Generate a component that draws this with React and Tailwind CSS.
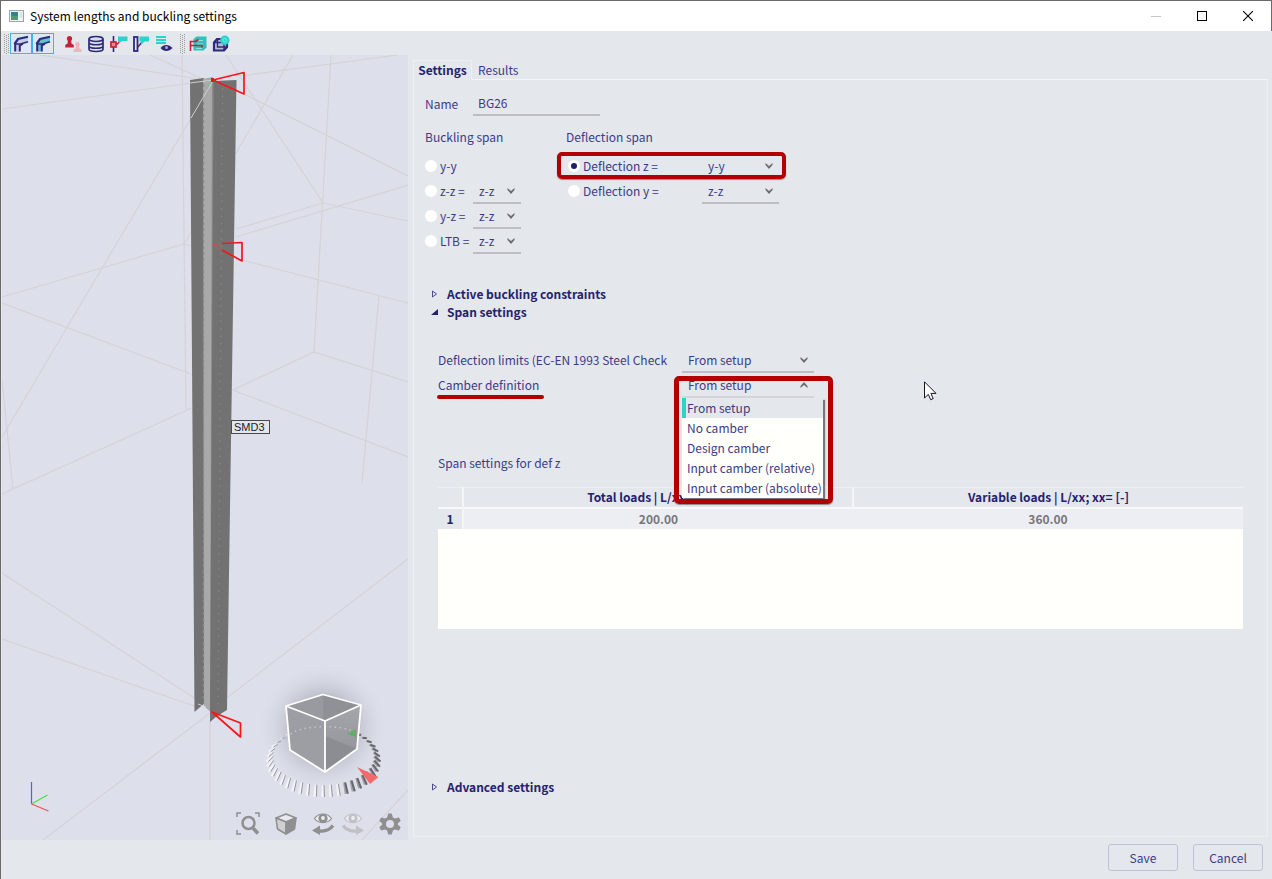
import { useState } from "react";
import clsx from "clsx";

const NAVY = "#2d2a7b";
const TEAL = "#2bd3cb";
const RED = "#c32338";

/* guide lines of the structure around the member */
const GRID_LINES = [
  "40,55 213,81",
  "150,55 205,80",
  "2,109 213,80",
  "240,76 398,55",
  "182,55 186,410 192,408",
  "213,81 2,437",
  "226,55 323,203",
  "293,55 236,153",
  "331,55 314,352",
  "240,92 408,176",
  "236,229 323,203 408,221",
  "236,237 408,185",
  "2,297 184,244 191,246",
  "184,244 191,232",
  "2,303 191,374",
  "242,260 408,303",
  "408,382 314,352 233,390 408,457",
  "379,296 362,483",
  "192,408 2,494",
  "2,380 13,489",
  "2,573 196,699",
  "2,639 200,708",
  "408,559 228,697",
  "210,713 43,840",
  "210,720 210,840",
  "408,790 362,840",
];

const RING = Array.from({ length: 44 }, (_, i) => {
  const a = (i / 44) * Math.PI * 2 + Math.PI / 2;
  const cos = Math.cos(a);
  const sin = Math.sin(a);
  return {
    x1: 324 + 56 * cos,
    y1: 761.5 + 35.5 * sin,
    x2: 324 + 51 * cos,
    y2: 756.5 + 28.5 * sin,
    side: cos,
    front: sin,
  };
});

const CAMBER_OPTIONS = [
  "From setup",
  "No camber",
  "Design camber",
  "Input camber (relative)",
  "Input camber (absolute)",
];

export default function App() {
  return (
    <div className="relative flex min-h-screen flex-col border-t border-l border-[#6b6b6b] bg-[#e4e7ec] font-['Noto_Sans_CJK_SC',sans-serif] text-[12px] leading-5 text-[#3d3b86]">
      <TitleBar />
      <Toolbar />
      <main className="flex flex-1 pl-px">
        <Viewport />
        <SettingsPanel />
      </main>
      <footer className="flex h-[39px] shrink-0 items-start justify-end gap-[15px] pt-1 pr-[9px]">
        <FooterButton>Save</FooterButton>
        <FooterButton>Cancel</FooterButton>
      </footer>
      <svg
        className="pointer-events-none absolute top-[380px] left-[923px]"
        width="13"
        height="20"
        viewBox="0 0 13 20"
      >
        <path
          d="M.5 .8V17L4.3 13.4L6.7 18.7L9.2 17.6L6.9 12.4H12Z"
          fill="#fff"
          stroke="#15152a"
        />
      </svg>
    </div>
  );
}

function FooterButton({ children }) {
  return (
    <button
      type="button"
      className="h-[27px] w-[70px] rounded-[3px] border border-[#bfc1d9]"
    >
      {children}
    </button>
  );
}

/* -------- window chrome ---------- */
function TitleBar() {
  return (
    <header className="flex h-[30px] shrink-0 items-center border-r border-[#6b6b6b] bg-white pl-2 text-black">
      <svg width="15" height="12" viewBox="0 0 15 12">
        <rect x=".5" y=".5" width="14" height="11" fill="#f4f6f6" stroke="#9aa5ab" />
        <rect x="2" y="2" width="7" height="8" fill="#3c7f86" />
        <rect x="2" y="6" width="7" height="4" fill="#4f9e72" />
        <path d="M10.5 3h3M10.5 5h3M10.5 7h3" stroke="#c2ced2" />
      </svg>
      <h1 className="ml-[6px] flex-1 text-[12px]">System lengths and buckling settings</h1>
      <button type="button" aria-label="Minimize" className="flex h-full w-[46px] items-center justify-center">
        <svg width="10" height="10"><path d="M0 5.5h10" stroke="#c4c4c4" /></svg>
      </button>
      <button type="button" aria-label="Maximize" className="flex h-full w-[46px] items-center justify-center">
        <svg width="10" height="10"><rect x=".5" y=".5" width="9" height="9" fill="none" stroke="#000" /></svg>
      </button>
      <button type="button" aria-label="Close" className="flex h-full w-[46px] items-center justify-center">
        <svg width="10" height="10"><path d="M0 0L10 10M10 0L0 10" stroke="#000" strokeWidth="1.1" /></svg>
      </button>
    </header>
  );
}

function Grip() {
  const rows = Array.from({ length: 10 }, (_, i) => i);
  return (
    <svg width="5" height="20" viewBox="0 0 5 20" fill="#9b9b9b" shapeRendering="crispEdges">
      {rows.map((r) => (
        <g key={r}>
          <rect x="0" y={r * 2} width="1" height="1" />
          <rect x="2" y={r * 2 + 1} width="1" height="1" />
          <rect x="4" y={r * 2} width="1" height="1" />
        </g>
      ))}
    </svg>
  );
}

function ToolButton({ label, active, children }) {
  return (
    <button
      type="button"
      aria-label={label}
      className={clsx(
        "flex h-[21px] w-[22px] items-center justify-center",
        active && "border border-[#3db4f2] bg-[#dfe8f2]"
      )}
    >
      <svg width="18" height="18" viewBox="0 0 18 18" className="shrink-0" fill="none">
        {children}
      </svg>
    </button>
  );
}

function BeamGlyph({ fill }) {
  return (
    <>
      <path d="M3 9L6 4.500L16 2V7L9 9L7.500 11.500V16.500H4V9Z" fill={fill} />
      <path d="M2.500 9L6 4L16 1.800" stroke={NAVY} strokeWidth="2.200" />
      <path d="M2.500 9H8.500L16 6.800" stroke={NAVY} strokeWidth="1.600" />
      <path d="M3.200 9V16.500" stroke={NAVY} strokeWidth="2" />
      <path d="M7.800 9.500V16.500" stroke={NAVY} strokeWidth="2" />
      <path d="M8 10.500L11 9" stroke={NAVY} strokeWidth="1.400" />
    </>
  );
}

function Toolbar() {
  return (
    <div className="flex h-6 shrink-0 items-center pt-px pl-[3px]">
      <Grip />
      <div className="ml-px flex">
        <ToolButton label="Show member" active>
          <BeamGlyph fill="#c9cbe0" />
        </ToolButton>
        <ToolButton label="Show rendered member" active>
          <BeamGlyph fill="#5fc3cf" />
        </ToolButton>
      </div>
      <div className="ml-2 flex gap-px">
        <ToolButton label="Supports">
          <g fill={RED}>
            <circle cx="5.500" cy="3.500" r="2.600" />
            <path d="M4 4H7L7.500 8.500L9.800 10V12.500H1.200V10L3.500 8.500Z" />
          </g>
          <g fill="#f3b4bb">
            <circle cx="13.500" cy="9.300" r="2.300" />
            <path d="M12.200 10H14.800L15.300 13.500L17.500 14.500V17H9.500V14.500L11.700 13.500Z" />
          </g>
        </ToolButton>
        <ToolButton label="Database">
          <path
            d="M2 4V14C2 17.300 16 17.300 16 14V4M2 7.500C2 10.500 16 10.500 16 7.500M2 11C2 14 16 14 16 11"
            stroke={NAVY}
            strokeWidth="1.700"
          />
          <ellipse cx="9" cy="4" rx="7" ry="2.500" stroke={NAVY} strokeWidth="1.600" fill="#d9dcec" />
        </ToolButton>
        <ToolButton label="Hinges">
          <path d="M3.500 1V17" stroke={NAVY} strokeWidth="1.600" />
          <rect x="1" y="7" width="5" height="5" fill="#e58a96" stroke={RED} strokeWidth="1.700" />
          <path d="M7 9.500L10 6" stroke={RED} strokeWidth="1.400" />
          <path d="M8 1.500H17.500V6H12L9 8.500V6H8Z" fill={TEAL} />
        </ToolButton>
        <ToolButton label="Member label">
          <rect x="1" y="2" width="3.500" height="14" stroke={NAVY} strokeWidth="1.800" fill="#e4e7ec" />
          <path d="M5 12L9 7" stroke={NAVY} strokeWidth="1.300" />
          <path d="M6.500 1.500H16V6.500H11.500L8 10V6.500H6.500Z" fill={TEAL} />
        </ToolButton>
        <ToolButton label="Visibility">
          <path d="M0 2H10M0 5H10M0 8H10" stroke={TEAL} strokeWidth="2" />
          <path d="M4.500 13C7.500 9 13 9 16.500 13C13 17 7.500 17 4.500 13Z" fill={NAVY} />
          <circle cx="10.500" cy="12.500" r="1.500" fill="#a9abc9" />
        </ToolButton>
      </div>
      <div className="ml-1 flex items-center">
        <Grip />
        <div className="ml-[2px] flex gap-px">
          <ToolButton label="Print picture">
            <path d="M4.500 4L7.500 1.500H17.500V12.500L14.500 15.500H4.500Z" fill="#2bc4bd" />
            <path d="M7 5.500H14M8 9H14M7 13.500H13" stroke="#8ee5df" />
            <path d="M1.500 16V6.500H6.500L9.500 4.500M2 10.500H13V12.500" stroke={RED} strokeWidth="1.600" />
          </ToolButton>
          <ToolButton label="Save picture">
            <path d="M2 7.500L5 4H15V12L12 15.500H2Z" fill="#b9bbd6" stroke={NAVY} strokeWidth="2.200" />
            <path d="M2.500 7.500H12V15M5.500 5V12H14" stroke={NAVY} strokeWidth="1.400" />
            <circle cx="12.800" cy="5.200" r="4.700" fill={TEAL} />
            <circle cx="12.800" cy="5.200" r="1.800" stroke="#7feae4" />
          </ToolButton>
        </div>
      </div>
    </div>
  );
}

/* -------- 3D view ---------- */
function Viewport() {
  return (
    <section className="relative flex w-[406px] shrink-0 flex-col justify-end overflow-hidden bg-[#dddfeb]">
      <svg
        className="absolute inset-0 h-full w-full"
        viewBox="2 55 406 785"
        preserveAspectRatio="xMidYMid slice"
      >
        <defs>
          <radialGradient id="glow">
            <stop offset="0" stopColor="#92949f" stopOpacity=".9" />
            <stop offset=".5" stopColor="#a5a7b3" stopOpacity=".55" />
            <stop offset="1" stopColor="#dddfeb" stopOpacity="0" />
          </radialGradient>
          <linearGradient id="cubeRight" x1="0" y1="0" x2="0" y2="1">
            <stop offset="0" stopColor="#a5a6ab" />
            <stop offset="1" stopColor="#8f9096" />
          </linearGradient>
        </defs>

        <g fill="none" stroke="#d3d4d6" strokeWidth="1.200">
          {GRID_LINES.map((points) => (
            <polyline key={points} points={points} />
          ))}
        </g>

        <polygon points="190,80 204,78 205,703 199,708 194.500,712" fill="#727272" />
        <polygon points="203,79 213,77 210.500,712 204,706" fill="#a9a9a9" />
        <polygon points="212,78 214,80 212,715 210,713" fill="#8c8c8c" />
        <polygon points="213.500,81 236.500,80 231,440 227,710 217,716 210,722" fill="#727272" />
        <path d="M203.500 84V703" stroke="#8b8b8b" strokeWidth="1.400" strokeDasharray="3 3" />
        <path d="M222.500 88L218 708" stroke="#8b8b8b" strokeDasharray="1.500 6" />
        <path d="M213 81L191 118M190 83L213 80M198 704L206 707" stroke="#cfcfcf" fill="none" />

        <g fill="none" stroke="#fb1418" strokeWidth="1.700" strokeLinejoin="round">
          <polygon points="213,80 244,72.500 244,94" />
          <path d="M222 243.500L242 242.500V261L222 250" />
          <path d="M212 244.500L222 243.500M212 244.500L222 250" stroke="#d05050" strokeWidth="1" />
          <polygon points="212,712 240.500,723 240.500,737" />
        </g>
        <rect x="211" y="78" width="3" height="4" fill="#e01818" />

        <rect x="231.500" y="420.500" width="38" height="13" fill="#e3e6ec" stroke="#4a4a4a" />
        <text x="234" y="431" fontSize="11" fill="#222" fontFamily="Liberation Sans, sans-serif">
          SMD3
        </text>

        <g fill="none" strokeWidth="1.200">
          <path d="M31.500 804V782" stroke="#5a5cf0" />
          <path d="M31.500 804L47.500 795" stroke="#45e04c" />
          <path d="M31.500 804L48.500 811" stroke="#f25058" />
        </g>

        <circle cx="323" cy="728" r="66" fill="url(#glow)" />
        {RING.map((t, i) => (
          <g key={i}>
            <line
              x1={t.x1 - 1.5}
              y1={t.y1}
              x2={t.x2 - 1}
              y2={t.y2}
              stroke={t.side > 0.3 ? "#a3a4aa" : "#f4f5f8"}
              strokeWidth={t.front < -0.5 ? 0.8 : 2.2}
            />
            <line
              x1={t.x1 + 0.5}
              y1={t.y1}
              x2={t.x2}
              y2={t.y2}
              stroke={t.side > 0.3 ? "#66676b" : "#8b8c92"}
              strokeWidth={t.side > 0.3 ? 2 : 0.9}
            />
          </g>
        ))}
        <polygon points="286,706 323,694.500 361,705 325,721" fill="#999aa0" />
        <polygon points="323,694.500 361,705 325,721 323,720" fill="#909197" />
        <polygon points="286,706 325,721 325,772 290,750" fill="#9d9ea4" />
        <polygon points="325,721 361,705 357,749 325,772" fill="url(#cubeRight)" />
        <polygon points="325,736 357,749 325,772" fill="#8c8d93" />
        <path d="M291 734C300 725 345 724 357 733" fill="none" stroke="#d3d4da" strokeWidth="1.500" strokeDasharray="1 4" />
        <polygon points="347,734 356,729 356,737" fill="#5fae66" />
        <g fill="none" stroke="#fff" strokeWidth="1.800" strokeLinejoin="round">
          <polygon points="286,706 323,694.500 361,705 325,721" />
          <path d="M286 706L290 750L325 772L357 749L361 705M325 721V772" />
        </g>
        <polygon points="357,767 378.500,777 370,784" fill="#f26a6c" />
      </svg>

      <div className="relative flex items-center justify-end gap-[15px] pr-[7px] pb-1">
        <button type="button" aria-label="Zoom all" className="h-6 w-6">
          <svg viewBox="0 0 24 24" fill="none" stroke="#8f8f8f">
            <path d="M1 5V1H5M19 1H23V5M1 18V22H5" strokeWidth="1.500" />
            <circle cx="12.500" cy="11" r="6" strokeWidth="2.500" />
            <path d="M16.500 15.500L22 21.500" strokeWidth="3.500" />
          </svg>
        </button>
        <button type="button" aria-label="View direction" className="h-[22px] w-[22px]">
          <svg viewBox="0 0 22 22" strokeLinejoin="round" stroke="#8f8f8f" strokeWidth="1.600">
            <polygon points="1,5 11,1 21,5 11,9" fill="#e8e9ee" />
            <polygon points="1,5 11,9 11,21 2.500,16" fill="#cfd0d6" />
            <polygon points="21,5 11,9 11,21 19.500,16" fill="#8f8f8f" />
          </svg>
        </button>
        <div className="flex gap-2">
          <button type="button" aria-label="Previous view" className="h-[22px] w-[22px] text-[#8f8f8f]">
            <EyeArrow />
          </button>
          <button type="button" aria-label="Next view" className="h-[22px] w-[22px] -scale-x-100 text-[#c0c1c6]">
            <EyeArrow />
          </button>
        </div>
        <button type="button" aria-label="View settings" className="h-[22px] w-[22px] text-[#8f8f8f]">
          <svg viewBox="0 0 22 22" fill="currentColor">
            <path
              fillRule="evenodd"
              d="M9.200 .5H12.800L13.900 4.500L15.900 5.600L19.900 4.600L21.700 7.700L18.800 10.500V11.500L21.700 14.300L19.900 17.400L15.900 16.400L13.900 17.500L12.800 21.500H9.200L8.100 17.500L6.100 16.400L2.100 17.400L.3 14.300L3.200 11.500V10.500L.3 7.700L2.100 4.600L6.100 5.600L8.100 4.500ZM11 7A4 4 0 1 0 11 15A4 4 0 1 0 11 7Z"
            />
          </svg>
        </button>
      </div>
    </section>
  );
}

function EyeArrow() {
  return (
    <svg viewBox="0 0 22 22" fill="none" stroke="currentColor">
      <path d="M2.500 5.500C6.500 -.5 15.500 -.5 19.500 5.500C15.500 11 6.500 11 2.500 5.500Z" fill="#eceef2" strokeWidth="1.200" />
      <circle cx="11" cy="5.500" r="4.600" fill="currentColor" stroke="none" />
      <circle cx="11" cy="5" r="1.900" fill="#eceef2" stroke="none" />
      <path d="M6 17.800C12 18.800 18 16.800 21 12.500" strokeWidth="3.400" />
      <path d="M0 17.500L8 12.500V22Z" fill="currentColor" stroke="none" />
    </svg>
  );
}

/* -------- form pieces ---------- */
function Chevron({ up }) {
  return (
    <svg width="8" height="6" viewBox="0 0 8 6" className="pointer-events-none absolute right-[6px]" fill="#6c6c70">
      {up ? <path d="M4 0L7.500 4V6L4 3L.5 6V4Z" /> : <path d="M4 6L.5 2V0L4 3L7.500 0V2Z" />}
    </svg>
  );
}

function Dropdown({ id, label, value, options = [value], open, className }) {
  return (
    <div className={clsx("relative flex h-full items-center border-b-2 border-[#bdbec1]", className)}>
      <select
        id={id}
        aria-label={label}
        defaultValue={value}
        className="h-full w-full appearance-none bg-transparent pl-[6px] outline-none"
      >
        {options.map((o) => (
          <option key={o}>{o}</option>
        ))}
      </select>
      <Chevron up={open} />
    </div>
  );
}

function Radio({ name, id, checked, onChange, children }) {
  return (
    <label htmlFor={id} className="flex h-6 items-center gap-[3px]">
      <input
        type="radio"
        name={name}
        id={id}
        checked={checked}
        onChange={onChange}
        className="m-0 h-3 w-3 appearance-none rounded-full border-[3px] border-white bg-white checked:bg-[#211e6e]"
      />
      {children}
    </label>
  );
}

function Expander({ open, className, children }) {
  return (
    <button
      type="button"
      aria-expanded={!!open}
      className={clsx(
        "flex h-[18px] items-center gap-[9px] text-left font-bold text-[#25226e]",
        className
      )}
    >
      <svg width="7" height="8" viewBox="0 0 7 8">
        {open ? (
          <path d="M7 1V7H0Z" fill="#25226e" />
        ) : (
          <path d="M1.500 1V7L5.500 4Z" fill="none" stroke="#4b4990" />
        )}
      </svg>
      {children}
    </button>
  );
}

/* -------- right side ---------- */
function SettingsPanel() {
  const [span, setSpan] = useState("def-z");

  return (
    <section className="flex min-w-0 flex-1 flex-col pt-[5px] pr-1 pb-[3px] pl-[5px]">
      <div className="flex h-5 shrink-0 leading-[18px]" role="tablist">
        <button
          type="button"
          role="tab"
          aria-selected="true"
          className="flex w-[59px] justify-center border-t border-r border-l border-[#edeff2] font-bold text-[#25226e]"
        >
          Settings
        </button>
        <div className="flex flex-1 border-b border-[#f4f5f6]">
          <button type="button" role="tab" aria-selected="false" className="px-[6px]">
            Results
          </button>
        </div>
      </div>

      <div className="flex flex-1 flex-col border-r border-b border-l border-[#edeff2] pr-6 pl-[11px]">
        <div className="mt-3 flex h-6">
          <label htmlFor="name" className="w-12 leading-6">
            Name
          </label>
          <input
            id="name"
            defaultValue="BG26"
            className="w-[127px] border-b-2 border-[#bdbec1] bg-transparent pl-[5px] outline-none"
          />
        </div>

        <div className="mt-[11px] flex">
          <fieldset className="w-[141px]">
            <legend>Buckling span</legend>
            <div className="mt-[7px] grid auto-rows-[25px] grid-cols-[48px_48px]">
              <Radio name="span" id="yy" checked={span === "yy"} onChange={() => setSpan("yy")}>
                y-y
              </Radio>
              <span />
              <Radio name="span" id="zz" checked={span === "zz"} onChange={() => setSpan("zz")}>
                z-z =
              </Radio>
              <Dropdown label="z-z span" value="z-z" />
              <Radio name="span" id="yz" checked={span === "yz"} onChange={() => setSpan("yz")}>
                y-z =
              </Radio>
              <Dropdown label="y-z span" value="z-z" />
              <Radio name="span" id="ltb" checked={span === "ltb"} onChange={() => setSpan("ltb")}>
                LTB =
              </Radio>
              <Dropdown label="LTB span" value="z-z" />
            </div>
          </fieldset>

          <fieldset>
            <legend>Deflection span</legend>
            <div className="relative mt-[7px] grid auto-rows-[25px] grid-cols-[134px_77px] pl-[2px]">
              <Radio name="span" id="def-z" checked={span === "def-z"} onChange={() => setSpan("def-z")}>
                Deflection z =
              </Radio>
              <Dropdown label="Deflection z span" value="y-y" />
              <Radio name="span" id="def-y" checked={span === "def-y"} onChange={() => setSpan("def-y")}>
                Deflection y =
              </Radio>
              <Dropdown label="Deflection y span" value="z-z" />
              <div className="pointer-events-none absolute -top-[2px] -left-[9px] h-[27px] w-[229px] rounded-[5px] border-4 border-[#b20000] shadow-[0_1px_1px_#8a8a8a]" />
            </div>
          </fieldset>
        </div>

        <Expander className="mt-[31px] pl-[6px]">Active buckling constraints</Expander>
        <Expander open className="pl-[6px]">
          Span settings
        </Expander>

        <div className="mt-[27px] ml-[13px] grid auto-rows-[25px] grid-cols-[244px_132px]">
          <label htmlFor="limits" className="truncate leading-6">
            Deflection limits (EC-EN 1993 Steel Check
          </label>
          <Dropdown id="limits" value="From setup" />
          <label htmlFor="camber" className="relative leading-6">
            Camber definition
            <span className="absolute -bottom-px -left-px h-1 w-[107px] rounded-full bg-[#b20000]" />
          </label>
          <CamberDropdown />
        </div>

        <p className="mt-[55px] ml-[13px] shrink-0">Span settings for def z</p>

        <SpanTable />

        <Expander className="mt-[149px] mb-[39px] pl-[6px]">Advanced settings</Expander>
      </div>
    </section>
  );
}

function CamberDropdown() {
  return (
    <div className="relative">
      <Dropdown id="camber" value="From setup" options={CAMBER_OPTIONS} open className="border-[#d3d5d9]" />
      <ul
        role="listbox"
        aria-label="Camber definition"
        className="absolute top-[25px] left-0 z-10 w-[141px] bg-[#fffffb] shadow-[2px_2px_1px_#77787c]"
      >
        {CAMBER_OPTIONS.map((o, i) => (
          <li
            key={o}
            role="option"
            aria-selected={i === 0}
            className={clsx(
              "h-5 whitespace-nowrap",
              i === 0 ? "border-l-4 border-[#2bd3cb] bg-[#e4e7ec] pl-px" : "pl-[5px]"
            )}
          >
            {o}
          </li>
        ))}
      </ul>
      <div className="pointer-events-none absolute top-[3px] -left-2 z-20 h-[128px] w-[159px] rounded-[5px] border-[5px] border-[#b20000] shadow-[0_1px_1px_#8a8a8a]" />
    </div>
  );
}

function SpanTable() {
  return (
    <div className="mt-[14px] ml-[13px] h-[142px] shrink-0 bg-[#fffffb]">
      <table className="w-full table-fixed border-collapse text-center">
        <thead>
          <tr className="h-5 border-t border-b-2 border-t-[#eeeff2] border-b-[#f7f8f8] bg-[#e4e7ec] leading-4 text-[#25226e]">
            <th className="w-[25px] border-r-2 border-[#f4f5f6] p-0" />
            <th className="border-r-2 border-[#f4f5f6] p-0">Total loads | L/xx; xx= [-]</th>
            <th className="p-0">Variable loads | L/xx; xx= [-]</th>
          </tr>
        </thead>
        <tbody>
          <tr className="h-[21px] bg-[#edeef3] leading-[18px] font-bold text-[#77777b]">
            <th className="border-r-2 border-[#f4f5f6] bg-[#e4e7ec] p-0 text-[#25226e]">1</th>
            <td className="p-0">200.00</td>
            <td className="p-0">360.00</td>
          </tr>
        </tbody>
      </table>
    </div>
  );
}
